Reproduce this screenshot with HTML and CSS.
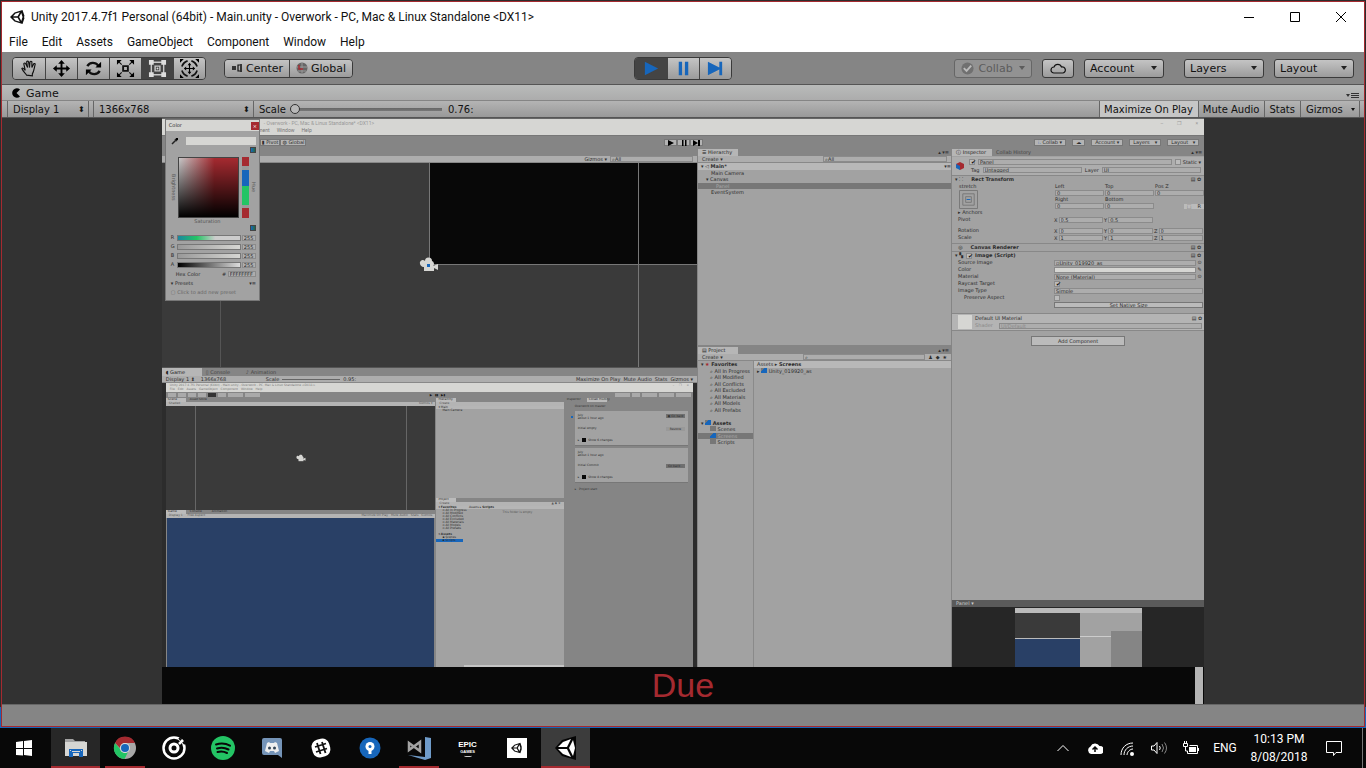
FILE: index.html
```html
<!DOCTYPE html>
<html lang="en">
<head>
<meta charset="utf-8">
<title>Unity 2017.4.7f1 Personal (64bit) - Main.unity - Overwork</title>
<link rel="stylesheet" href="styles.css">
</head>
<body>
<svg class="defs" aria-hidden="true">
  <symbol id="unity" viewBox="0 0 16 16"><path fill="currentColor" fill-rule="evenodd" d="M0 8 4.500 3.500 12.500 1l2 6-.6 1 .6 1-2 6-8-2.500zM3 7.200h4.600l2.300-4L5.500 4.500zm0 1.600 2.500 2.700 4.400 1.300-2.300-4zM11.300 4 9.100 8l2.200 4 1.200-4z"/></symbol>
  <symbol id="cam" viewBox="0 0 20 15"><path fill="#d6d6d3" d="M1 5a3 3 0 0 1 5-1 3.500 3.500 0 0 1 7 0 3 3 0 0 1 1 5l5-2v6l-4-2v3H5v-4a4 4 0 0 1-4-5z"/></symbol>
</svg>

<main class="window">
  <header class="titlebar">
    <svg class="app-icon" viewBox="0 0 16 16"><use href="#unity"/></svg>
    <h1>Unity 2017.4.7f1 Personal (64bit) - Main.unity - Overwork - PC, Mac &amp; Linux Standalone &lt;DX11&gt;</h1>
    <div class="captions">
      <button aria-label="Minimize"><svg viewBox="0 0 12 12"><path d="M1 6.500h10"/></svg></button>
      <button aria-label="Maximize"><svg viewBox="0 0 12 12"><path d="M1.500 1.500h9v9h-9z"/></svg></button>
      <button aria-label="Close"><svg viewBox="0 0 12 12"><path d="m1 1 10 10M11 1 1 11"/></svg></button>
    </div>
  </header>
  <nav class="menubar">
    <button>File</button><button>Edit</button><button>Assets</button><button>GameObject</button><button>Component</button><button>Window</button><button>Help</button>
  </nav>

  <div class="toolbar">
    <div class="tools">
      <div class="group tall">
        <button aria-label="Hand"><svg viewBox="0 0 20 20"><path class="ln" d="M7 17c-1-2-4-4-5-7 1-1 2 0 3.500 2L4 5c.5-1 1.500-1 2 0l2 4-1-6c.5-1 1.600-1 2 0l1 6 .5-6c.5-1 1.600-.8 2 0v6l2-4c.8-.6 1.500-.2 1.500.7-1 3-1 7-3 10v2z"/></svg></button>
        <button aria-label="Move"><svg viewBox="0 0 20 20"><path d="m10 1 3.500 4H11v4h4V6.500l4 3.500-4 3.500V11h-4v4h2.500L10 19l-3.500-4H9v-4H5v2.500L1 10l4-3.500V9h4V5H6.500z"/></svg></button>
        <button aria-label="Rotate"><svg viewBox="0 0 20 20"><path fill="none" stroke="#111" stroke-width="2.500" d="M3.500 7.500C6 3 12 3 15 7M16.500 12.500C14 17 8 17 5 13"/><path d="M18 3v6h-6zM2 17v-6h6z"/></svg></button>
        <button aria-label="Scale"><svg viewBox="0 0 20 20"><path fill="none" stroke="#111" stroke-width="2" d="M7.500 7.500h5v5h-5z"/><path class="ln" d="m2 2 4 4M18 2l-4 4M2 18l4-4M18 18l-4-4"/><path d="M1 1h5L1 6zM19 1h-5l5 5zM1 19h5l-5-5zM19 19h-5l5-5z"/></svg></button>
        <button class="on" aria-label="Rect"><svg viewBox="0 0 20 20"><path class="lt" d="M3.500 3.500h13v13h-13z"/><path class="lf" d="M1 1h5v5H1zM14 1h5v5h-5zM1 14h5v5H1zM14 14h5v5h-5z"/><path class="lt" d="M7.500 7.500h5v5h-5z"/><circle class="lf" cx="10" cy="10" r="1"/></svg></button>
        <button aria-label="Transform"><svg viewBox="0 0 20 20"><path d="m10 4 2 2.500h-1.400v2.900h2.900V8L16 10l-2.500 2v-1.400h-2.900v2.900H12L10 16l-2-2.500h1.400v-2.900H6.500V12L4 10l2.500-2v1.400h2.900V6.500H8z"/><path fill="none" stroke="#111" stroke-width="1.800" d="M2 8c1-3 3-5 6-6M12 2c3 1 5 3 6 6M18 12c-1 3-3 5-6 6M8 18c-3-1-5-3-6-6"/><path d="M0 0h4L0 4zM20 0h-4l4 4zM0 20h4l-4-4zM20 20h-4l4-4z"/></svg></button>
      </div>
      <div class="group">
        <button><svg viewBox="0 0 12 12"><path d="M1 4h4v4H1z" opacity=".7"/><path class="ln" d="M9 3H7v6h2"/><path d="M9 2h2v8H9z" opacity=".7"/></svg>Center</button>
        <button><svg viewBox="0 0 12 12"><circle cx="6" cy="6" r="5.500" fill="#666"/><path d="M1 5h10M6 1v10M2 9h8" stroke="#999" fill="none"/><path d="M3 3v4h4" stroke="#a52a30" fill="none" stroke-width="1.500"/></svg>Global</button>
      </div>
    </div>
    <div class="group tall play">
      <button class="on" aria-label="Play"><svg viewBox="0 0 20 20"><path d="m3 3 14 7-14 7z"/></svg></button>
      <button aria-label="Pause"><svg viewBox="0 0 20 20"><path d="M5 3h3.500v14H5zM11.500 3H15v14h-3.500z"/></svg></button>
      <button aria-label="Step"><svg viewBox="0 0 20 20"><path d="m2 3 12 6V3h3v14h-3v-6L2 17z"/></svg></button>
    </div>
    <div class="tools right">
      <button class="btn collab" disabled><svg viewBox="0 0 14 14"><circle cx="7" cy="7" r="6.500" fill="#707070"/><path d="m3 6.500 3 3L11 4" fill="none" stroke="#bbb" stroke-width="2"/></svg>Collab <i class="caret"></i></button>
      <button class="btn cloud" aria-label="Services"><svg viewBox="0 0 16 12"><path class="ln" d="M4 11a3 3 0 0 1 0-6 4 4 0 0 1 7.500 0A3 3 0 0 1 13 11z"/></svg></button>
      <span class="dd gap"><select aria-label="Account"><option>Account</option></select></span>
      <span class="dd"><select aria-label="Layers"><option>Layers</option></select></span>
      <span class="dd"><select aria-label="Layout"><option>Layout</option></select></span>
    </div>
  </div>

  <div class="tabstrip">
    <button class="tab"><svg viewBox="0 0 10 10"><path d="M9 1.500A4.700 4.700 0 1 0 9 8.500L5.500 5z"/></svg>Game</button>
    <svg class="panemenu" viewBox="0 0 14 8"><path fill="#333" d="M0 2h4L2 5zM5 1h8v1H5zM5 3h8v1H5zM5 5h8v1H5z"/></svg>
  </div>
  <div class="gamebar">
    <span class="pick display"><select aria-label="Display"><option>Display 1</option></select></span>
    <span class="pick size"><select aria-label="Resolution"><option>1366x768</option></select></span>
    <label for="scale">Scale</label><input id="scale" type="range" min="0" max="100" value="0"><output for="scale">0.76:</output>
    <div class="toggles"><button class="on">Maximize On Play</button><button>Mute Audio</button><button>Stats</button><button>Gizmos <i class="caret"></i></button></div>
  </div>

  <section class="gameview">
    <div class="game">
      <div class="g-title"><span>- Overwork - PC, Mac &amp; Linux Standalone* &lt;DX11&gt;</span><b>–</b><b>❐</b><b>×</b></div>
      <div class="g-menu"><span>nent</span><span>Window</span><span>Help</span></div>
      <div class="g-tools">
        <div class="g-left"><button>▮ Pivot</button><button>◍ Global</button></div>
        <div class="g-play"><button aria-label="Play"><svg viewBox="0 0 8 6"><path d="m1 0 6 3-6 3z"/></svg></button><button aria-label="Pause"><svg viewBox="0 0 8 6"><path d="M2 0h1.500v6H2zM5 0h1.500v6H5z"/></svg></button><button aria-label="Step"><svg viewBox="0 0 8 6"><path d="m0 0 5 3V0h2v6H5V3L0 6z"/></svg></button></div>
        <div class="g-right"><button><em>⁝.</em> Collab ▾</button><button>☁</button><button class="w">Account <i>▾</i></button><button class="w">Layers <i>▾</i></button><button class="w">Layout <i>▾</i></button></div>
      </div>

      <div class="g-body">
        <div class="col-scene">
          <div class="g-tabs"></div>
          <div class="g-bar end"><span>Gizmos ▾</span><input aria-label="Search scene" value="⌕All"></div>
          <div class="scene"><div class="canvas-rect"></div><svg class="camera" viewBox="0 0 20 15"><use href="#cam"/><path fill="#1766bb" d="M8 7h3v3H8z"/></svg></div>
          <div class="g-tabs game-tabs"><button class="on">◖ Game</button><button>▯ Console</button><button>♪ Animation</button></div>
          <div class="g-bar"><span class="w1">Display 1 ⬍</span><span class="w2">1366x768</span><span>Scale</span><hr><span>0.95:</span><span class="far">Maximize On Play</span><span>Mute Audio</span><span>Stats</span><span>Gizmos ▾</span></div>
          <div class="nested">
            <div class="n-title"><span>Unity 2017.4.7f1 Personal (64bit) - Main.unity - Overwork - PC, Mac &amp; Linux Standalone &lt;DX11&gt;</span><span>File &nbsp; Edit &nbsp; Assets &nbsp; GameObject &nbsp; Component &nbsp; Window &nbsp; Help</span><i>– &nbsp; &nbsp; ❐ &nbsp; &nbsp; ×</i></div>
            <div class="n-tools"><u></u><u></u><u></u><u></u><u class="d"></u><u></u><u class="wide"></u><u class="wide"></u><span>▶ &nbsp; ▮▮ &nbsp; ▶▮</span><u class="wide"></u><u></u><u class="wide"></u><u class="wide"></u><u class="wide"></u></div>
            <div class="n-body">
              <div class="n-left">
                <div class="n-tab"><b>Scene</b><span>Asset Store</span></div><div class="n-bar"><span>Shaded</span><span>Gizmos ▾</span></div>
                <div class="n-scene"><svg viewBox="0 0 20 15"><use href="#cam"/></svg></div>
                <div class="n-tab"><b>Game</b><span>Console</span><span>Animation</span></div><div class="n-bar"><span>Display 1 &nbsp; &nbsp; Free Aspect</span><span>Maximize On Play &nbsp; Mute Audio &nbsp; Stats &nbsp; Gizmos</span></div>
                <div class="n-blue"></div>
              </div>
              <div class="n-mid">
                <div class="n-tab"><b>Hierarchy</b></div><div class="n-bar"><span>Create</span></div>
                <div class="n-list top"><span class="hl">▾ Main</span><span>Main Camera</span></div>
                <div class="n-tab"><b>Project</b></div><div class="n-bar"><span>Create</span><span>▲ ◆ ★</span></div>
                <div class="n-list"><span class="hl">▾ <b>Favorites</b> &nbsp; &nbsp; &nbsp; &nbsp; &nbsp; &nbsp; Assets ▸ <b>Scripts</b></span><span>▫ All In Progress</span><span>▫ All Modified</span><span>▫ All Conflicts</span><span>▫ All Excluded</span><span>▫ All Materials</span><span>▫ All Models</span><span>▫ All Prefabs</span><span class="as">▾ <b>Assets</b></span><span>▪ Scenes</span><span class="sel">▪ Scripts</span><em>This folder is empty</em><hr></div>
              </div>
              <div class="n-right">
                <div class="n-tab"><span>Inspector</span><b>Collab History</b></div>
                <p>Overwork on master</p>
                <article><i></i><span>July<br>about 1 hour ago</span><button>▣ Go back</button><span>Initial empty</span><button class="pale">Restore</button><span class="file">▸ <b></b>Show 6 changes</span></article>
                <article><span>July<br>about 1 hour ago</span><span>Initial Commit</span><button>Go back...</button><span class="file last">▸ <b></b>Show 8 changes</span></article>
                <p>▸ &nbsp; Project start</p>
              </div>
            </div>
          </div>
        </div>

        <div class="col-mid">
          <div class="g-tabs"><button class="on">☰ Hierarchy</button><i>▴ ▾≡</i></div>
          <div class="g-bar"><span>Create ▾</span><input aria-label="Search hierarchy" value="⌕All"></div>
          <div class="hier"><div class="hier-rows">
            <div class="row hl">▾ ◁ <b>Main*</b><i>▾≡</i></div>
            <div class="row in">Main Camera</div>
            <div class="row in2">▾ Canvas</div>
            <div class="row sel">Panel</div>
            <div class="row in">EventSystem</div>
          </div></div>
          <div class="g-tabs"><button class="on">▤ Project</button><i>▴ ▾≡</i></div>
          <div class="g-bar"><span>Create ▾</span><input class="mid" aria-label="Search project" value="⌕"><span>♟</span><span>◆</span><span>★</span></div>
          <div class="proj">
            <div class="tree"><div class="tree-rows">
              <div class="row">▾ <em>★</em> <b>Favorites</b></div>
              <div class="row in3">⌕ All In Progress</div><div class="row in3">⌕ All Modified</div><div class="row in3">⌕ All Conflicts</div><div class="row in3">⌕ All Excluded</div><div class="row in3">⌕ All Materials</div><div class="row in3">⌕ All Models</div><div class="row in3">⌕ All Prefabs</div>
              <div class="row"></div>
              <div class="row">▾ <s class="bl"></s> <b>Assets</b></div>
              <div class="row in3"><s></s> Scenes</div><div class="row in3 sel2"><s class="bl"></s> Screens</div><div class="row in3"><s></s> Scripts</div>
            </div></div>
            <div class="files"><div class="row hl">Assets ▸ <b>Screens</b></div><div class="row">▸ <s class="bl"></s> Unity_019920_as</div></div>
          </div>
        </div>

        <div class="col-insp">
          <div class="g-tabs"><button class="on">ⓘ Inspector</button><button>Collab History</button><i>▴ ▾≡</i></div>
          <div class="insp">
            <div class="obj"><svg viewBox="0 0 10 10"><path fill="#a52a30" d="m1 3 4-2 4 2v4L5 9z"/><path fill="#1766bb" d="M1 3l4 2v4L1 7z"/></svg>
              <div class="obj-rows"><div class="fr"><input type="checkbox" checked aria-label="Active"><input class="grow" aria-label="Name" value="Panel"><label><input type="checkbox"> Static ▾</label></div>
              <div class="fr"><span class="tag">Tag</span><select class="grow" aria-label="Tag"><option>Untagged</option></select><span>Layer</span><select class="grow" aria-label="Layer"><option>UI</option></select></div></div></div>
            <div class="head">▾ ⸬ <b>Rect Transform</b><i>▤ ✿</i></div>
            <div class="rect">
              <div class="anchor"><span>stretch</span><svg viewBox="0 0 20 20"><path d="M.5.5h19v19H.5zM4 4h12v12H4zM7 7h6v6H7z" fill="none" stroke="#777"/><path stroke="#1766bb" d="M8 10h4"/></svg></div>
              <div class="xyz"><span>Left</span><span>Top</span><span>Pos Z</span><input aria-label="Left" value="0"><input aria-label="Top" value="0"><input aria-label="Pos Z" value="0"><span>Right</span><span>Bottom</span><span></span><input aria-label="Right" value="0"><input aria-label="Bottom" value="0"><span class="br"><button>⬚</button><button>R</button></span></div>
            </div>
            <div class="f"><span>▸ Anchors</span></div>
            <div class="f"><span>Pivot</span><div class="xyz"><label>X <input value="0.5"></label><label>Y <input value="0.5"></label></div></div>
            <div class="f tall3"><span>Rotation</span><div class="xyz"><label>X <input value="0"></label><label>Y <input value="0"></label><label>Z <input value="0"></label></div></div>
            <div class="f"><span>Scale</span><div class="xyz"><label>X <input value="1"></label><label>Y <input value="1"></label><label>Z <input value="1"></label></div></div>
            <div class="head second">&nbsp; ◎ <b>Canvas Renderer</b><i>▤ ✿</i></div>
            <div class="head">▾ ▚ <input type="checkbox" checked aria-label="Image enabled"><b class="near">Image (Script)</b><i>▤ ✿</i></div>
            <div class="f"><span>Source Image</span><input aria-label="Source Image" value="▫Unity_019920_as"><i>⊙</i></div>
            <div class="f"><span>Color</span><input aria-label="Color" class="white"><i>✎</i></div>
            <div class="f"><span>Material</span><input aria-label="Material" value="None (Material)"><i>⊙</i></div>
            <div class="f"><span>Raycast Target</span><input type="checkbox" checked aria-label="Raycast Target"></div>
            <div class="f"><span>Image Type</span><select aria-label="Image Type"><option>Simple</option></select></div>
            <div class="f"><span class="ind">Preserve Aspect</span><input type="checkbox" aria-label="Preserve Aspect"></div>
            <div class="f"><span></span><button>Set Native Size</button></div>
            <div class="mat"><s></s><div><span>Default UI Material<i>▤ ✿</i></span><span class="dim">Shader &nbsp; <select aria-label="Shader"><option>UI/Default</option></select></span></div></div>
            <button class="add">Add Component</button>
          </div>
          <div class="prev-head">Panel ▾</div>
          <div class="preview"><div class="thumb"><div class="t1"></div><div class="t2"></div><div class="t3"></div></div></div>
        </div>
      </div>

      <div class="g-due">Due<span></span></div>

      <aside class="picker">
        <header>Color<button aria-label="Close color">×</button></header>
        <div class="p-in">
          <div class="drop"><svg viewBox="0 0 8 8"><path stroke="#222" stroke-width="1.500" d="m1 7 4-4M4 2l2 2"/><path d="M5 1h2v2H5z"/></svg><span></span></div>
          <div class="mini"><s></s></div>
          <div class="field"><span class="vert">Brightness</span><div class="sv"></div><div class="hue"></div><span class="vert">Hue</span></div>
          <div class="sat">Saturation</div>
          <div class="mini"><s></s></div>
          <div class="ch r"><span>R</span><div></div><input aria-label="Red" value="255"></div>
          <div class="ch"><span>G</span><div></div><input aria-label="Green" value="255"></div>
          <div class="ch"><span>B</span><div></div><input aria-label="Blue" value="255"></div>
          <div class="ch a"><span>A</span><div></div><input aria-label="Alpha" value="255"></div>
          <label class="hex">Hex Color <span># <input value="FFFFFFFF"></span></label>
          <div class="pres">▾ Presets<i>▾≡</i></div>
          <div class="pres dim">▢ Click to add new preset</div>
        </div>
      </aside>
    </div>
  </section>
  <div class="statusbar"></div>
</main>

<footer class="taskbar">
  <button class="start" aria-label="Start"><svg viewBox="0 0 16 16"><path fill="#fff" d="m0 2 7-1v7H0zM8 1l8-1v8H8zM0 9h7v6.500L0 15zM8 9h8v7l-8-1z"/></svg></button>
  <button class="run dark" aria-label="File Explorer"><svg viewBox="0 0 24 24"><path fill="#a3a3a3" d="M1 3h8l2 2h10v4H1z"/><path fill="#d6d6d3" d="M1 6h22v14H1z"/><path fill="#1766bb" d="M5 13h14v8h-4v-4H9v4H5z"/><path d="M6 14h1v1H6zM17 14h1v1h-1zM8 15h8v1H8z" fill="#d6d6d3"/></svg></button>
  <button class="part" aria-label="Chrome"><svg viewBox="0 0 24 24"><circle cx="12" cy="12" r="11" fill="#a8a8a8"/><path fill="#a52a30" d="M2 7a11 11 0 0 1 20 0H12a5 5 0 0 0-5 5z"/><path fill="#23c464" d="M2 7a11 11 0 0 0 9.500 16L15 16a5 5 0 0 1-8-3z"/><circle cx="12" cy="12" r="5" fill="#ddd"/><circle cx="12" cy="12" r="4" fill="#1766bb"/></svg></button>
  <button aria-label="Music"><svg viewBox="0 0 24 24"><circle cx="12" cy="12" r="10.500" fill="none" stroke="#fff" stroke-width="2.500"/><circle cx="12" cy="12" r="4" fill="none" stroke="#fff" stroke-width="3"/><path stroke="#080808" stroke-width="2" d="m17 2 6 6"/><path stroke="#fff" stroke-width="2.500" d="m17 8 4-4"/></svg></button>
  <button aria-label="Spotify"><svg viewBox="0 0 24 24"><circle cx="12" cy="12" r="12" fill="#23c464"/><path fill="none" stroke="#080808" stroke-linecap="round" stroke-width="2" d="M5 8.500c5-1.500 10-1 14 1.200M6 12.500c4-1.200 8-.8 11.500 1M6.500 16c3.500-1 6.500-.6 9.500 1"/></svg></button>
  <button aria-label="Discord"><svg viewBox="0 0 24 24"><path fill="#7594b8" d="M4 2h16a2 2 0 0 1 2 2v18l-4-3H4a2 2 0 0 1-2-2V4a2 2 0 0 1 2-2z"/><path fill="#eee" d="m7 7 2-1 1 1h4l1-1 2 1 2 8-4 2-1-2h-4l-1 2-4-2z"/><circle cx="9.500" cy="12" r="1.500" fill="#345"/><circle cx="14.500" cy="12" r="1.500" fill="#345"/></svg></button>
  <button aria-label="Slack"><svg viewBox="0 0 24 24"><rect x="3" y="3" width="18" height="18" rx="7" fill="#fff" transform="rotate(-15 12 12)"/><path stroke="#111" stroke-width="1.800" d="m8 7 3.500 11M13 6l3.500 11M6 11l11-3.500M7 16l11-3.500"/></svg></button>
  <button aria-label="Sourcetree"><svg viewBox="0 0 24 24"><circle cx="12" cy="12" r="10.500" fill="#1766bb"/><circle cx="12" cy="10.500" r="4.500" fill="#fff"/><path fill="#fff" d="M10.500 13h3v5h-3z"/><circle cx="12" cy="10.500" r="1.500" fill="#1766bb"/></svg></button>
  <button class="part" aria-label="Visual Studio"><svg viewBox="0 0 24 24"><path fill="none" stroke="#a3a3a3" stroke-width="2.500" d="m2 7 11 8V6L2 14z"/><path fill="#6f9bc9" d="m18 1 6 1v20l-6 2-17-5 17 2z"/></svg></button>
  <button class="epic" aria-label="Epic Games"><b>EPIC</b><small>GAMES</small><i></i></button>
  <button aria-label="Unity Hub"><svg viewBox="0 0 24 24"><path fill="#fff" d="M2 2h20v20H2z"/><use href="#unity" x="6" y="6" width="12" height="12" color="#111"/></svg></button>
  <button class="run active" aria-label="Unity"><svg viewBox="0 0 24 24"><path fill="#050505" d="m1 12 7-8 14-4v24L8 20z"/><path fill="#fff" d="m4 11 5-5 8-3-4 8zM4 13l5 5 8 3-4-8zM19 4l2 8-2 8-4-8z"/></svg></button>

  <div class="tray">
    <button aria-label="Show hidden icons"><svg viewBox="0 0 16 16"><path d="m2.500 11 5.500-5.500L13.500 11" class="w"/></svg></button>
    <button aria-label="OneDrive"><svg viewBox="0 0 16 16"><path fill="#fff" d="M4 14a4 4 0 0 1-.5-7.500 5 5 0 0 1 9-.5A4 4 0 0 1 13 14z"/><path stroke="#080808" fill="none" stroke-width="1.500" d="M8 12V7M5.500 9.500 8 7l2.500 2.500"/></svg></button>
    <button aria-label="Network"><svg viewBox="0 0 16 16"><path class="w" stroke-width="1" d="M2 15C2 8 7 3 14 3M5 15c0-5 4-9 9-9M8 15c0-3 3-6 6-6"/><circle cx="13" cy="14" r="2" fill="#fff"/></svg></button>
    <button aria-label="Volume"><svg viewBox="0 0 16 16"><path class="w" d="M.5 6H3l3-3.500v11L3 10H.5z"/><path class="w" d="M8.500 6q1.500 2 0 4"/><path fill="none" stroke="#888" d="M11 4q3 4 0 8M13.500 2.500q4 5.500 0 11"/></svg></button>
    <button aria-label="Battery"><svg viewBox="0 0 16 16"><path fill="#fff" d="M6 7h7v5H6z"/><path class="w" d="M6.500 5.500h8v8h-10V11M15.500 8v3M.5 3.500v3h4v-3zM1.500 1v2M3.500 1v2M2.500 7v4h2"/></svg></button>
    <button class="lang">ENG</button>
    <time datetime="2018-08-08T22:13">10:13 PM<br>8/08/2018</time>
    <button class="note" aria-label="Notifications"><svg viewBox="0 0 18 18"><path class="w" d="M1.500 2.500h15v11H11l-2.500 3v-3h-7z"/></svg></button>
    <button class="peek" aria-label="Show desktop"></button>
  </div>
</footer>
</body>
</html>
```
FILE: styles.css
```css
* { box-sizing: border-box; }
:root { --red: #a52a30; --blue: #1766bb; --panel: #a2a2a2; --chrome: #858585; --pale: #d6d6d3; --line: #555; }
body { margin: 0; height: 100vh; display: flex; flex-direction: column; background: linear-gradient(#2d2d2d 92%, var(--blue) 92%); font-family: Roboto, "Open Sans", sans-serif; font-size: 12px; color: #111; overflow: hidden; }
button, input, select { font: inherit; color: inherit; margin: 0; padding: 0; border: 0; background: none; border-radius: 0; min-width: 0; }
select { appearance: none; }
i, em { font-style: normal; }
h1, p { margin: 0; font: inherit; }
.defs { display: none; }
svg { display: block; flex: none; }

.window { flex: 1; min-height: 0; margin: 1px; border: 1px solid var(--red); background: #fff; display: flex; flex-direction: column; }
.titlebar { display: flex; align-items: center; height: 29px; padding-left: 8px; gap: 5px; }
.titlebar h1 { flex: 1; white-space: nowrap; }
.app-icon { width: 16px; height: 16px; }
.captions { display: flex; }
.captions button { width: 46px; display: grid; place-items: center; }
.captions svg { width: 12px; height: 12px; fill: none; stroke: #000; }
.menubar { display: flex; gap: 14px; height: 21px; padding-left: 7px; align-items: center; }

.toolbar { height: 33px; background: var(--chrome); border-bottom: 1px solid var(--line); display: grid; grid-template-columns: 1fr auto 1fr; align-items: center; padding: 0 10px; font: 11px "DejaVu Sans", sans-serif; }
.tools { display: flex; align-items: center; gap: 18px; }
.tools.right { justify-content: flex-end; gap: 10px; }
.group { display: flex; height: 19px; border: 1px solid #3a3a3a; border-radius: 4px; overflow: hidden; }
.group.tall { height: 23px; }
.group button { display: flex; align-items: center; justify-content: center; gap: 3px; padding: 0 6px 0 6px; background: linear-gradient(#c4c4c4, #9b9b9b); }
.group button + button { border-left: 1px solid #444; }
.group svg { width: 12px; height: 12px; }
.group.tall button { width: 32px; padding: 0; }
.group.tall svg { width: 19px; height: 19px; }
.group.play svg { fill: var(--blue); }
.group .on { background: #444; }
.ln { fill: none; stroke: #111; stroke-width: 1.2; }
.lt { fill: none; stroke: #c8c8c8; stroke-width: 1.5; }
.lf { fill: #ddd; }
.btn, .dd select { height: 19px; border: 1px solid #3a3a3a; border-radius: 3px; background: linear-gradient(#c4c4c4, #9b9b9b); }
.btn { display: flex; align-items: center; justify-content: center; gap: 4px; }
.btn.collab { width: 78px; color: #5c5c5c; border-color: #666; background: #929292; }
.collab svg { width: 13px; height: 13px; }
.cloud { width: 32px; }
.cloud svg { width: 16px; height: 12px; }
.caret { display: inline-block; border: 3px solid transparent; border-top: 4px solid currentColor; border-bottom: 0; vertical-align: middle; margin-left: 2px; }
.dd { display: grid; align-items: center; }
.dd.gap { margin-right: 10px; }
.dd select, .dd::after, .pick select, .pick::after { grid-area: 1 / 1; }
.dd select { width: 80px; padding-left: 5px; }
.dd::after { content: ""; justify-self: end; margin-right: 7px; border: 3px solid transparent; border-top: 4px solid #222; border-bottom: 0; }

.tabstrip { height: 16px; background: linear-gradient(#b9bbba, #acacac); border-bottom: 1px solid #858585; display: flex; align-items: center; justify-content: space-between; padding: 1px 4px 0 9px; font: 11px "DejaVu Sans", sans-serif; }
.tab { display: flex; align-items: center; gap: 5px; }
.tab svg { width: 10px; height: 10px; }
.panemenu { width: 14px; height: 8px; align-self: flex-end; }
.gamebar { height: 17px; background: linear-gradient(#b4b4b4, #999); border-bottom: 1px solid var(--line); display: flex; align-items: center; padding: 0 4px 0 5px; font: 10px "DejaVu Sans", sans-serif; }
.pick { display: grid; align-items: center; border: solid #666; border-width: 0 1px; height: 100%; }
.pick select { padding-left: 5px; width: 100%; }
.pick::after { content: "⬍"; justify-self: end; font-size: 8px; margin-right: 3px; }
.display { width: 82px; }
.size { width: 161px; margin: 0 5px 0 4px; }
#scale { appearance: none; width: 152px; height: 12px; margin: 0 6px 0 4px; background: linear-gradient(#666, #777) center / 100% 3px no-repeat; }
#scale::-webkit-slider-thumb { appearance: none; width: 10px; height: 10px; border: 1px solid #333; border-radius: 50%; background: #b8b8b8; }
.toggles { margin-left: auto; display: flex; height: 100%; }
.toggles button { border-left: 1px solid #666; padding: 0 5px 0 4px; }
.toggles button:last-child { padding: 0 4px 0 5px; border-right: 1px solid #666; }
.toggles .on { background: #c6c6c6; }
.toggles .caret { margin-left: 5px; border-width: 3px 2px 0; }

.gameview { flex: 1; min-height: 0; background: #323232; display: flex; justify-content: center; }
.statusbar { height: 22px; background: var(--chrome); border-top: 1px solid #666; }

/* rendered game frame */
.game { position: relative; height: 100%; aspect-ratio: 1366 / 768; display: flex; flex-direction: column; background: var(--chrome); font: 5px/7px "DejaVu Sans", sans-serif; color: #2c2c2c; overflow: hidden; white-space: nowrap; }
.game input, .game select { background: #adadad; border: 1px solid #8b8b8b; height: 6px; padding: 0 1px; font-size: 5px; line-height: 4px; width: 100%; }
.game input[type="checkbox"] { appearance: none; width: 6px; flex: none; background: #bbb; display: inline-grid; place-items: center; }
.game input[type="checkbox"]:checked::after { content: "✔"; font-size: 6px; line-height: 4px; color: #111; }
.game button { line-height: 5px; }
.g-title { height: 9px; background: var(--pale); color: #999; display: flex; gap: 14px; padding: 1px 6px 0 102px; border-top: 1px solid #666; }
.g-title span { flex: 1; }
.g-title b { font-weight: normal; }
.g-title, .g-menu { font-family: Roboto, sans-serif; }
.g-menu { height: 8px; background: var(--pale); color: #777; display: flex; gap: 7px; padding-left: 98px; }
.g-tools { height: 14px; display: grid; grid-template-columns: 1fr auto 1fr; align-items: center; padding: 0 5px 0 98px; border-top: 1px solid #777; }
.g-tools button { height: 7px; background: #b4b4b4; padding: 0 3px; border: 1px solid #777; }
.g-left, .g-play { display: flex; }
.g-left button { padding: 0 1px; }
.g-play { margin-right: 92px; }
.g-tools .g-play button { width: 13px; padding: 0; display: grid; place-items: center; }
.g-play svg { width: 8px; height: 6px; }
.g-right { display: flex; gap: 6px; justify-content: flex-end; }
.g-right em { color: var(--blue); }
.g-right .w { width: 32px; text-align: left; display: flex; justify-content: space-between; }
.g-body { flex: 1; min-height: 0; display: grid; grid-template-columns: 535fr 253fr 252fr; column-gap: 1px; }
.g-body > div { display: flex; flex-direction: column; min-height: 0; min-width: 0; }
.g-tabs { height: 7px; display: flex; font-size: 5px; flex: none; }
.game-tabs { height: 8px; }
.g-tabs button { width: 40px; text-align: left; padding-left: 4px; color: #444; }
.g-tabs .on { background: #b6b6b6; color: #222; }
.g-tabs i { margin-left: auto; padding-right: 2px; }
.g-bar { height: 7px; flex: none; background: #adadad; display: flex; gap: 3px; padding: 0 4px; border-bottom: 1px solid #888; line-height: 6px; }
.g-bar .far { margin-left: auto; }
.g-bar .w1 { width: 32px; }
.g-bar .w2 { width: 62px; }
.g-bar hr { width: 58px; height: 1px; margin: 3px 0; border: 0; background: #666; }
.g-bar input { width: 124px; margin-left: auto; }
.g-bar .mid { width: 122px; }
.g-bar.end { justify-content: flex-end; }
.g-bar.end input { width: 83px; margin-left: 0; }

.scene { flex: 204; min-height: 0; background: linear-gradient(90deg, transparent 58px, #555 58px, #555 59px, transparent 59px) #3a3a3a; position: relative; border-bottom: 1px solid #555; }
.canvas-rect { position: absolute; left: 50%; right: 0; top: 0; height: 50%; background: #080808; border: solid #777; border-width: 0 0 1px 1px; }
.scene::after { content: ""; position: absolute; left: 89%; top: 0; bottom: 0; border-left: 1px solid #777; }
.camera { position: absolute; left: 48%; top: 46%; width: 20px; height: 15px; }
.nested { flex: 284; min-height: 0; margin: 0 4px; background: var(--chrome); display: flex; flex-direction: column; font-size: 3px; line-height: 3px; outline: 4px solid #2c2c2c; clip-path: inset(0 -4px 0 -4px); }
.n-title { height: 9px; background: var(--pale); color: #777; display: grid; grid-template-columns: 1fr auto; padding: 1px 4px; row-gap: 1px; }
.n-title i { grid-area: 1 / 2; }
.n-tools { height: 6px; display: flex; align-items: center; gap: 2px; padding: 0 2px; }
.n-tools u { width: 8px; height: 4px; background: #aaa; }
.n-tools .d { background: #333; }
.n-tools .wide { width: 15px; }
.n-tools span { margin: 0 auto; color: #111; }
.n-body { flex: 1; min-height: 0; display: grid; grid-template-columns: 271fr 128fr 129fr; column-gap: 1px; }
.n-body > div { display: flex; flex-direction: column; min-height: 0; min-width: 0; overflow: hidden; }
.n-tab { height: 4px; display: flex; gap: 2px; flex: none; font-size: 3px; }
.n-tab b, .n-tab span { width: 20px; padding-left: 2px; }
.n-tab b { background: #bbb; font-weight: normal; }
.n-bar { height: 4px; flex: none; background: #b4b4b4; display: flex; justify-content: space-between; padding: 0 3px; color: #555; }
.n-scene { flex: 104; background: linear-gradient(90deg, transparent 29px, #666 29px, #666 30px, transparent 30px, transparent 240px, #666 240px, #666 241px, transparent 241px) #3a3a3a; display: grid; place-items: center; }
.n-scene svg { width: 10px; height: 8px; }
.n-blue { flex: 149; background: #294066; margin: 0 1px; }
.n-list { flex: 158; min-height: 0; background: var(--panel); display: grid; align-content: start; position: relative; }
.n-list.top { flex: 91; }
.n-list span { padding-left: 6px; }
.n-list .hl { background: #b6b6b6; padding-left: 2px; }
.n-list .as { margin-top: 3px; padding-left: 2px; }
.n-list .sel { background: var(--blue); width: 27px; }
.n-list em { position: absolute; top: 5px; left: 52%; color: #555; }
.n-list hr { position: absolute; bottom: 0; left: 28px; right: 0; margin: 0; border: 0; height: 2px; background: #c4c4c4; }
.n-right { padding-right: 5px; }
.n-right p { padding: 3px 10px; color: #333; }
.n-right article { flex: none; height: 35px; margin: 0 0 2px 10px; background: var(--panel); padding: 3px; display: grid; grid-template-columns: 1fr auto; align-content: space-between; position: relative; border-bottom: 1px solid #777; }
.n-right article span { grid-column: 1; }
.n-right article button { grid-column: 2; background: #707070; width: 19px; height: 4px; line-height: 3px; }
.n-right article .pale { background: #999; }
.n-right article > i { position: absolute; left: -4px; top: 5px; width: 2px; height: 2px; background: var(--blue); }
.n-right .file b { display: inline-block; width: 4px; height: 4px; margin: 0 2px; background: #080808; vertical-align: middle; }

.col-mid { background: var(--chrome); }
.hier { flex: 182; min-height: 0; background: var(--panel); margin-bottom: 2px; }
.hier-rows, .tree-rows { display: grid; grid-auto-rows: 1fr; }
.hier-rows { height: 33px; }
.tree-rows { height: 85px; }
.row { line-height: 6px; padding-left: 3px; min-height: 0; }
.row.hl { background: #b8b8b8; }
.row > i { float: right; }
.row.in { padding-left: 13px; }
.row.in2 { padding-left: 8px; }
.row.sel { padding-left: 18px; background: #777; color: #aaa; }
.row em { color: var(--red); }
.row s { display: inline-block; width: 6px; height: 5px; background: #777; vertical-align: top; }
.row .bl { background: linear-gradient(135deg, #777 30%, var(--blue) 30%); }
.proj { flex: 306; min-height: 0; display: grid; grid-template-columns: 56px 1fr; background: var(--panel); }
.tree { border-right: 1px solid #8a8a8a; overflow: hidden; }
.files .row { height: 7px; }
.row.in3 { padding-left: 12px; }
.sel2 { background: #777; color: #aaa; }

.insp { flex: 1; min-height: 0; background: var(--panel); display: flex; flex-direction: column; padding-top: 1px; }
.obj { display: flex; gap: 4px; padding: 0 3px; background: #adadad; height: 18px; align-items: center; flex: none; }
.obj svg { width: 10px; height: 10px; }
.obj-rows { flex: 1; display: grid; gap: 1px; }
.fr { display: flex; align-items: center; gap: 3px; height: 7px; }
.fr .grow { flex: 1; width: 0; }
.fr label { display: flex; gap: 2px; align-items: center; }
.tag { padding-left: 2px; }
.head { height: 8px; flex: none; display: flex; align-items: center; gap: 3px; padding: 0 3px; border-top: 1px solid #888; }
.head.second { margin-top: 2px; }
.head b { padding-left: 5px; }
.head .near { padding: 0; }
.head i { margin-left: auto; }
.rect { display: grid; grid-template-columns: 100px 1fr; flex: none; padding-left: 3px; height: 26px; }
.anchor { padding-left: 4px; }
.anchor svg { width: 19px; height: 19px; }
.xyz { display: grid; grid-template-columns: repeat(3, 1fr); column-gap: 1px; flex: 1; line-height: 6px; }
.xyz label { display: flex; align-items: center; gap: 1px; }
.br { text-align: right; }
.br button { background: #bbb; width: 10px; }
.f { height: 7px; flex: none; display: flex; align-items: center; padding-right: 1px; }
.f > span { width: 102px; padding-left: 6px; flex: none; }
.f > .ind { padding-left: 12px; }
.f > input, .f > select, .f > button { flex: 1; }
.f > button { background: #bbb; height: 6px; border: 1px solid #777; line-height: 4px; }
.f > i { width: 7px; text-align: center; }
.game .f .white { background: var(--pale); }
.f.tall3 { margin-top: 4px; }
.mat { flex: none; margin-top: 5px; height: 18px; background: #b4b4b4; border: solid #888; border-width: 1px 0; display: flex; gap: 3px; padding: 1px 2px 1px 6px; }
.mat s { width: 14px; background: var(--pale); }
.mat div { flex: 1; display: grid; }
.mat span { display: flex; align-items: center; gap: 3px; }
.mat i { margin-left: auto; }
.dim { color: #888; }
.add { align-self: center; width: 94px; height: 10px; margin-top: 5px; background: #bbb; border: 1px solid #777; }
.prev-head { height: 7px; flex: none; background: #5a5a5a; color: #ccc; padding-left: 4px; }
.preview { height: 60px; flex: none; background: #262626; display: flex; justify-content: center; }
.thumb { width: 127px; margin-top: 1px; border-top: 5px solid #bbb; display: grid; grid-template-columns: 65fr 31fr 31fr; background: #999; }
.t1 { background: linear-gradient(#3a3a3a 46%, #bbb 46%, #bbb 49%, #294066 49%); }
.t2 { background: linear-gradient(var(--panel) 42%, #ccc 42%, #ccc 45%, var(--panel) 45%); }
.t3 { background: linear-gradient(var(--panel) 34%, var(--chrome) 34%); }

.g-due { height: 37px; flex: none; background: #080808; color: var(--red); font: 34px/36px "Liberation Sans", sans-serif; text-align: center; position: relative; }
.g-due span { position: absolute; right: 1px; top: 0; bottom: 0; width: 8px; background: #b4b4b4; }

.picker { position: absolute; left: 3px; top: 1px; width: 95px; background: var(--panel); border: 1px solid #777; }
.picker header { height: 11px; background: var(--pale); display: flex; justify-content: space-between; padding: 2px 0 0 3px; }
.picker header button { width: 8px; height: 8px; background: var(--red); color: #fff; }
.p-in { padding: 6px 3px 2px 5px; display: flex; flex-direction: column; }
.drop { display: flex; gap: 7px; height: 8px; }
.drop svg { width: 8px; height: 8px; }
.drop span { flex: 1; background: var(--pale); }
.mini { height: 7px; margin: 2px 0 3px; display: flex; justify-content: flex-end; }
.mini s { width: 6px; height: 6px; background: linear-gradient(90deg, #1766bb, #236a44); border: 1px solid #444; }
.field { display: flex; gap: 2px; height: 61px; }
.vert { writing-mode: vertical-rl; text-align: center; width: 5px; line-height: 5px; color: #555; }
.sv { width: 61px; border: 1px solid #444; background: linear-gradient(to top, #000, transparent), linear-gradient(90deg, #c8c8c8, #a52a30 60%); }
.hue { width: 7px; margin-left: 1px; background: linear-gradient(#a52a30 14%, #999 14%, #999 22%, #1766bb 22%, #1766bb 48%, #23c464 48%, #23c464 78%, #999 78%, #999 84%, #a52a30 84%); }
.sat { text-align: center; padding-right: 12px; color: #555; }
.picker .sat + .mini { margin: 0 0 1px; }
.ch { display: flex; gap: 1px; height: 9px; align-items: center; }
.ch span { width: 5px; }
.ch div { flex: 1; height: 6px; background: linear-gradient(90deg, #999, var(--pale)); border: 1px solid #777; }
.r div { background: linear-gradient(90deg, #1b87a0, #23c464 30%, #ccc 60%); }
.a div { background: linear-gradient(90deg, #000, #ddd); }
.picker .ch input { width: 14px; }
.hex { display: flex; justify-content: space-between; height: 11px; align-items: center; padding-left: 5px; }
.picker .hex input { width: 28px; }
.pres { height: 9px; display: flex; justify-content: space-between; }
.pres.dim { justify-content: flex-start; color: #666; }

/* Windows taskbar */
.taskbar { height: 40px; flex: none; background: #080808; color: #fff; display: flex; }
.taskbar > button { width: 49px; display: grid; place-items: center; }
.taskbar > button > svg { width: 24px; height: 24px; }
.taskbar > .start { width: 48px; margin-right: 3px; }
.taskbar > .start > svg { width: 16px; height: 16px; }
.run { box-shadow: inset 0 -2px var(--red); }
.part { background: linear-gradient(var(--red), var(--red)) bottom / 40px 2px no-repeat; }
.dark { background: #272727; }
.active { background: #3c3c3c; }
.taskbar > .epic { align-content: center; font-family: "Liberation Sans", sans-serif; }
.epic b { font-size: 8px; line-height: 10px; }
.epic small { font-size: 4px; line-height: 4px; font-weight: bold; }
.epic i { width: 8px; height: 3px; border-bottom: 1px solid #ccc; border-radius: 50%; }
.tray { margin-left: auto; display: flex; align-items: center; }
.tray button { width: 32px; height: 100%; display: grid; place-items: center; }
.tray svg { width: 16px; height: 16px; }
.tray .w { fill: none; stroke: #fff; }
.tray .lang { width: 36px; }
.tray time { width: 72px; text-align: center; line-height: 18px; }
.tray .note { width: 38px; }
.tray .note svg { width: 18px; height: 18px; }
.tray .peek { width: 4px; margin-left: 9px; border-left: 1px solid #777; }
```
